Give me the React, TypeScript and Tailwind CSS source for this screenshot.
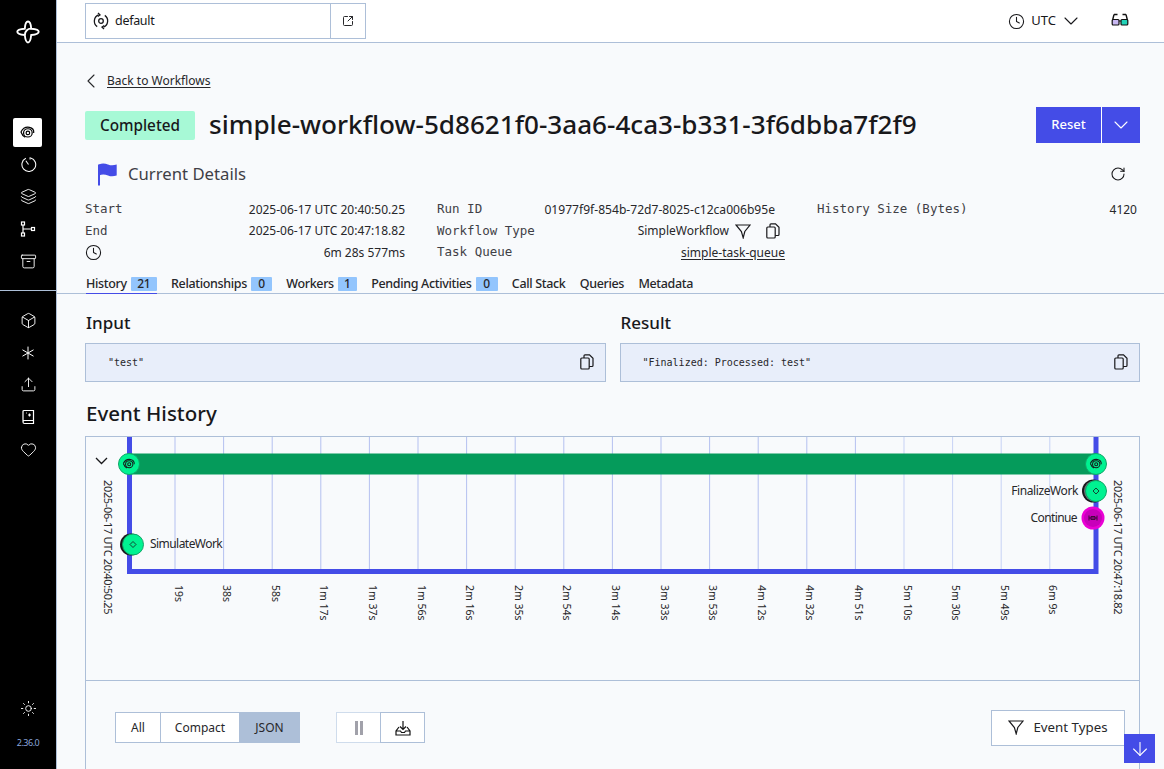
import React from 'react';
import {
  Archive,
  ArrowDown,
  Asterisk,
  Box,
  ChevronDown,
  ChevronLeft,
  Clock,
  Heart,
  Layers,
  RotateCw,
  SquareArrowOutUpRight,
  Sun,
  Upload,
} from 'lucide-react';

const sans = 'font-["Noto_Sans",sans-serif]';

const Swirl: React.FC<{ size?: number; className?: string }> = ({ size = 16, className }) => (
  <svg width={size} height={size} viewBox="0 0 16 16" fill="none" stroke="currentColor" strokeWidth="1.3" className={className}>
    <path d="M1 7.500C3 3.500 7 2 10 2.500c3 .6 5 3 4.600 6" />
    <ellipse cx="8.400" cy="8.400" rx="4.600" ry="4.400" />
    <circle cx="8.400" cy="8.400" r="1.900" />
    <path d="M1 7.500c1 2.600 2.400 4.600 4.600 5.600" />
  </svg>
);

const NamespaceIcon = () => (
  <svg width="16" height="18" viewBox="0 0 16 18" fill="none" stroke="#18181b" strokeWidth="1.300">
    <circle cx="8" cy="9" r="2.300" />
    <path d="M5.500 2.800A6.800 6.800 0 0 0 4.200 14.600" />
    <path d="M10.500 15.200A6.800 6.800 0 0 0 11.800 3.400" />
    <path d="M5 1l2 2-2.300 1.500M11 17l-2-2 2.300-1.500" />
  </svg>
);

const Logo = () => (
  <svg width="24" height="24" viewBox="0 0 24 24" fill="none" stroke="white" strokeWidth="1.9">
    <path d="M12 1.500c2.200 0 3 4 3.200 7.200 3 .2 7.500 1 7.500 3 0 2.300-4.700 3-7.500 3.300-.3 3-1.200 7.500-3.200 7.500s-2.900-4.500-3.200-7.500C6 14.700 1.300 14 1.300 11.700c0-2 4.500-2.800 7.500-3C9 5.500 9.800 1.500 12 1.500Z" />
    <path d="M15.200 8.700C12 8.400 9 11 8.800 15" />
  </svg>
);

const TimerIcon = () => (
  <svg width="17" height="17" viewBox="0 0 16 16" fill="none" stroke="white" strokeWidth="1">
    <path d="M5.500 2.200A6.500 6.500 0 1 0 10 1.800" />
    <path d="M8 8 5.500 4.500" />
    <path d="M9.500 1.200v2" />
  </svg>
);

const ScheduleTree = () => (
  <svg width="16" height="16" viewBox="0 0 16 16" fill="none" stroke="white" strokeWidth="1.200">
    <rect x="1.500" y="1" width="3" height="3" />
    <rect x="1.500" y="12" width="3" height="3" />
    <rect x="11.500" y="6.500" width="3" height="3" />
    <path d="M3 4v8M3 8h8.500" />
  </svg>
);

const BookPlus = () => (
  <svg width="16" height="16" viewBox="0 0 16 16" fill="none" stroke="white" strokeWidth="1.200">
    <path d="M3 13V2.500A1 1 0 0 1 4 1.500h9.500v10H4.500A1.500 1.500 0 0 0 3 13Zm0 0a1.500 1.500 0 0 0 1.500 1.500h9v-3" />
    <path d="M9.500 4.500v3M8 6h3M6 4h.8" />
  </svg>
);

const Glasses3d = () => (
  <svg width="18" height="18" viewBox="0 0 18 18" className="-mt-[2px]">
    <path d="M3 3.500 1.500 9.500M15 3.500l1.500 6M3 3.500h3.500M11.500 3.500H15" fill="none" stroke="#111" strokeWidth="1.400" />
    <rect x="1.200" y="8.500" width="6.800" height="5.500" rx="1" fill="#c9b8f2" stroke="#111" strokeWidth="1.200" />
    <rect x="10" y="8.500" width="6.800" height="5.500" rx="1" fill="#22d3b8" stroke="#111" strokeWidth="1.200" />
    <path d="M8 10h2" stroke="#111" strokeWidth="1.200" />
  </svg>
);

const FlagIcon = () => (
  <svg width="20" height="24" viewBox="0 0 20 24" className="text-[#444ce7]">
    <path d="M1 2.500v21" stroke="currentColor" strokeWidth="2" />
    <path d="M1 2.500c3-1.600 6-1.200 9 0s5.500 1 8.700 0v11c-3.200 1-5.700 1.200-8.700 0s-6-1.500-9 0Z" fill="currentColor" />
  </svg>
);

const DownloadTray = () => (
  <svg width="16" height="16" viewBox="0 0 16 16" fill="none" stroke="#111" strokeWidth="1.200">
    <path d="M8 1v8M5 6.500 8 9.500l3-3" />
    <path d="M4 7 1 11v4h14v-4l-3-4M1 11h4.500l1 1.500h3l1-1.500H15" />
  </svg>
);

const CopyIcon: React.FC<{ className?: string }> = ({ className }) => (
  <svg width="14" height="16" viewBox="0 0 14 16" fill="none" stroke="#18181b" strokeWidth="1.200" className={className}>
    <rect x="0.800" y="4" width="8.400" height="11" rx="1" />
    <path d="M4 4V1.800a1 1 0 0 1 1-1h4.500l3.500 3.500v7.200a1 1 0 0 1-1 1H9.200" />
  </svg>
);

const FunnelIcon: React.FC<{ className?: string }> = ({ className }) => (
  <svg width="16" height="15" viewBox="0 0 16 15" fill="none" stroke="#18181b" strokeWidth="1.200" className={className}>
    <path d="M1 1h14L9.800 7.500 8.200 13.800 6.400 7.500Z" />
  </svg>
);

const sideIcon = 'h-[32.400px] flex items-center justify-center text-white';

const Sidebar = () => (
  <aside className="w-[57px] shrink-0 h-full bg-black border-r border-[#adbfd8] flex flex-col">
    <div className="h-[63px] flex items-center justify-center"><Logo /></div>
    <div className="h-[290px]">
      <div className="pt-[55px]">
        <div className="h-[29px] w-[29px] mx-[13px] bg-white rounded-[2px] flex items-center justify-center text-black mb-[1px]">
          <Swirl size={15} />
        </div>
        <div className={sideIcon}><TimerIcon /></div>
        <div className={sideIcon}><Layers size={17} strokeWidth={1.300} /></div>
        <div className={sideIcon}><ScheduleTree /></div>
        <div className={sideIcon}><Archive size={17} strokeWidth={1.300} /></div>
      </div>
    </div>
    <div className="h-[1px] bg-[#adbfd8] -mt-[63px] mb-[13px]" />
    <div className={sideIcon}><Box size={17} strokeWidth={1.300} /></div>
    <div className={sideIcon}><Asterisk size={24} strokeWidth={1} /></div>
    <div className={sideIcon}><Upload size={17} strokeWidth={1.300} /></div>
    <div className={sideIcon}><BookPlus /></div>
    <div className={sideIcon}><Heart size={17} strokeWidth={1.300} /></div>
    <div className="flex-1" />
    <div className={sideIcon}><Sun size={17} strokeWidth={1.300} /></div>
    <div className={`text-[9px] tracking-[-0.5px] leading-[14px] text-[#8aa5dc] text-center mt-[11px] mb-[19px] ${sans}`}>2.36.0</div>
  </aside>
);

const TopBar = () => (
  <header className="h-[43px] shrink-0 bg-white border-b border-[#adbfd8] flex items-center pl-[28px] pr-[35px]">
    <div className="w-[281px] h-[36px] border border-[#adbfd8] flex items-center">
      <div className="flex-1 flex items-center pl-[7px] gap-[6px] text-[#18181b]">
        <NamespaceIcon />
        <span className="text-[12.500px] tracking-[-0.3px]">default</span>
      </div>
      <div className="w-[35px] h-[34px] border-l border-[#adbfd8] flex items-center justify-center">
        <SquareArrowOutUpRight size={12} className="text-[#27272a]" />
      </div>
    </div>
    <div className="flex-1" />
    <div className="flex items-center text-[#18181b]">
      <Clock size={17} strokeWidth={1.500} />
      <span className="text-[13px] ml-[6px]">UTC</span>
      <ChevronDown size={24} strokeWidth={1.100} className="ml-[3px]" />
    </div>
    <div className="ml-[28px]"><Glasses3d /></div>
  </header>
);

const tabs = [
  { label: 'History', count: 21, badge: 'w-[26px]', active: true },
  { label: 'Relationships', count: 0, badge: 'w-[21px]' },
  { label: 'Workers', count: 1, badge: 'w-[19px]' },
  { label: 'Pending Activities', count: 0, badge: 'w-[22px]' },
  { label: 'Call Stack' },
  { label: 'Queries' },
  { label: 'Metadata' },
];

const Tabs = () => (
  <div className="h-[20px] mt-[10px] border-b border-[#adbfd8] -mr-[24px] -ml-[29px] pl-[30px] flex gap-[14.300px] text-[12.500px] tracking-[-0.34px] font-medium text-[#27272a]">
    {tabs.map((t) => (
      <div key={t.label} className={`h-[20px] flex items-start ${t.active ? 'border-b-[1.500px] border-[#444ce7]' : ''}`}>
        <span className="leading-[15px] mt-[2px]">{t.label}</span>
        {t.count !== undefined && (
          <span className={`ml-[4px] mt-[3px] h-[14px] ${t.badge} bg-[#93c5fd] rounded-[1px] text-[12px] leading-[14px] text-center`}>{t.count}</span>
        )}
      </div>
    ))}
  </div>
);

const Row: React.FC<{ label: string; children: React.ReactNode }> = ({ label, children }) => (
  <div className="flex items-center justify-between h-[21.500px]">
    <span className="font-['DejaVu_Sans_Mono',monospace] text-[12.500px] text-[#3f3f46]">{label}</span>
    <span className="text-[12px] text-[#27272a] flex items-center">{children}</span>
  </div>
);

const Details = () => (
  <div className="flex mt-[8px]">
    <div className="w-[320px]">
      <Row label="Start">2025-06-17 UTC 20:40:50.25</Row>
      <Row label="End">2025-06-17 UTC 20:47:18.82</Row>
      <div className="flex items-center justify-between h-[21.500px] text-[12px] text-[#27272a]">
        <Clock size={17} strokeWidth={1.500} className="text-[#18181b]" />
        <span>6m 28s 577ms</span>
      </div>
    </div>
    <div className="w-[338px] ml-[32px]">
      <Row label="Run ID"><span className="text-[12.100px]">01977f9f-854b-72d7-8025-c12ca006b95e</span></Row>
      <Row label="Workflow Type">
        SimpleWorkflow
        <FunnelIcon className="ml-[6px]" />
        <CopyIcon className="ml-[15px] mr-[-5px]" />
      </Row>
      <Row label="Task Queue"><span className="underline underline-offset-2 mr-[-10px]">simple-task-queue</span></Row>
    </div>
    <div className="w-[320px] ml-[42px]">
      <Row label="History Size (Bytes)">4120</Row>
    </div>
  </div>
);

const Payload: React.FC<{ title: string; value: string }> = ({ title, value }) => (
  <div className="flex-1">
    <h3 className="text-[17px] leading-[24px] font-medium text-[#18181b] pl-[1px]">{title}</h3>
    <div className="mt-[8px] h-[39px] bg-[#e8eefa] border border-[#adbfd8] flex items-center justify-between pl-[22px] pr-[11px]">
      <span className="font-['DejaVu_Sans_Mono',monospace] text-[10px] text-[#27272a]">{value}</span>
      <CopyIcon />
    </div>
  </div>
);

const ticks = ['19s', '38s', '58s', '1m 17s', '1m 37s', '1m 56s', '2m 16s', '2m 35s', '2m 54s', '3m 14s', '3m 33s', '3m 53s', '4m 12s', '4m 32s', '4m 51s', '5m 10s', '5m 30s', '5m 49s', '6m 9s'];

// chart coords are page coords minus (86, 437)
const Timeline = () => (
  <svg width="1053" height="243" viewBox="0 0 1053 243" className="block" fontFamily="'Noto Sans', sans-serif" fill="#27272a">
    {ticks.map((t, i) => {
      const x = 89 + i * 48.6;
      return (
        <g key={t}>
          <line x1={x} y1="0" x2={x} y2="133" stroke={i > 14 ? '#c7d2f5' : '#b4c0f0'} strokeWidth="1" />
          <text transform={`translate(${x - 0.5} 148) rotate(90)`} fontSize="10.500">{t}</text>
        </g>
      );
    })}
    <path d="M43.500 0V134.500H1010V0" fill="none" stroke="#444ce7" strokeWidth="5" />
    <rect x="43" y="16.500" width="967" height="21" fill="#059b5b" />
    <path d="M10 21l5.500 5.500L21 21" fill="none" stroke="#18181b" strokeWidth="1.300" />
    <text transform="translate(18 43) rotate(90)" fontSize="11" letterSpacing="-0.350">2025-06-17 UTC 20:40:50.25</text>
    <text transform="translate(1028 43) rotate(90)" fontSize="11" letterSpacing="-0.350">2025-06-17 UTC 20:47:18.82</text>

    <circle cx="43" cy="27" r="10.500" fill="#00f291" stroke="#10a567" strokeWidth="1" />
    <g transform="translate(36.500 20.500) scale(0.8)" color="#18181b"><Swirl size={16} /></g>
    <circle cx="1010" cy="27" r="10.500" fill="#00f291" stroke="#10a567" strokeWidth="1" />
    <g transform="translate(1003.500 20.500) scale(0.8)" color="#18181b"><Swirl size={16} /></g>

    <circle cx="45" cy="107.500" r="11" fill="#18181b" />
    <circle cx="47" cy="107.500" r="10.500" fill="#00f291" stroke="#10a567" strokeWidth="1" />
    <path d="M47 104.500l3 3-3 3-3-3Z" fill="none" stroke="#18181b" strokeWidth="0.800" />
    <text x="64" y="111" fontSize="12" letterSpacing="-0.550">SimulateWork</text>

    <circle cx="1007.500" cy="54" r="11.500" fill="#18181b" />
    <circle cx="1008.500" cy="54" r="10.500" fill="#71717a" />
    <circle cx="1010" cy="54" r="10.500" fill="#00f291" stroke="#10a567" strokeWidth="1" />
    <path d="M1010 51l3 3-3 3-3-3Z" fill="none" stroke="#18181b" strokeWidth="0.800" />
    <text x="992" y="57.500" fontSize="12" textAnchor="end" letterSpacing="-0.400">FinalizeWork</text>

    <circle cx="1007" cy="81" r="11.500" fill="#ea00d5" />
    <circle cx="1007" cy="81" r="9" fill="#c800ba" />
    <path d="M1003 78.500v5M1011 78.500v5M1003 81h8M1005 79.500h4v3h-4Z" fill="none" stroke="#3f0a3a" strokeWidth="1" />
    <text x="991" y="84.500" fontSize="12" textAnchor="end" letterSpacing="-0.600">Continue</text>
  </svg>
);

const segBtn = 'h-[31px] flex items-center justify-center text-[12px] text-[#27272a] border-y border-[#adbfd8]';

const Controls = () => (
  <div className="flex items-center pl-[29px] pr-[14px] h-[94px]">
    <div className="flex">
      <div className={`${segBtn} w-[45px] bg-white border-l`}>All</div>
      <div className={`${segBtn} w-[79px] bg-white border-l`}>Compact</div>
      <div className={`${segBtn} w-[61px] bg-[#adbfd8]`}>JSON</div>
    </div>
    <div className="flex ml-[36px]">
      <div className="w-[44px] h-[31px] bg-white border border-[#cfdcec] border-r-0 flex items-center justify-center">
        <div className="flex gap-[2px]">
          <span className="w-[3px] h-[14px] bg-[#a1a1aa]" />
          <span className="w-[3px] h-[14px] bg-[#a1a1aa]" />
        </div>
      </div>
      <div className="w-[45px] h-[31px] bg-white border border-[#adbfd8] flex items-center justify-center"><DownloadTray /></div>
    </div>
    <div className="flex-1" />
    <div className="w-[134px] h-[36px] bg-white border border-[#adbfd8] flex items-center justify-center gap-[9px] text-[13.300px] text-[#27272a]">
      <FunnelIcon />
      Event Types
    </div>
  </div>
);

export default function App() {
  return (
    <div className={`relative h-[769px] w-[1164px] overflow-hidden flex bg-[#f8fafc] ${sans}`}>
      <Sidebar />
      <div className="flex-1 min-w-0 flex flex-col">
        <TopBar />
        <main className="flex-1 pl-[28px] pr-[24px] pt-[26px]">
          <a className="flex items-center h-[24px] text-[12px] text-[#27272a]">
            <ChevronLeft size={24} strokeWidth={1.100} className="mr-[4px] -ml-[6px]" />
            <span className="underline underline-offset-2">Back to Workflows</span>
          </a>
          <div className="flex items-center mt-[14px] h-[36px]">
            <span className="h-[29px] w-[110px] bg-[#a7f9d6] rounded-[2px] flex items-center justify-center text-[15.300px] font-medium text-[#18181b]">Completed</span>
            <h1 className="ml-[14px] text-[26.100px] font-medium text-[#18181b] whitespace-nowrap">simple-workflow-5d8621f0-3aa6-4ca3-b331-3f6dbba7f2f9</h1>
            <div className="flex-1" />
            <div className="flex text-white bg-white">
              <div className="w-[65px] h-[36px] bg-[#444ce7] flex items-center justify-center text-[13px] font-medium">Reset</div>
              <div className="w-[38px] h-[36px] ml-[1px] bg-[#444ce7] flex items-center justify-center"><ChevronDown size={24} strokeWidth={1.100} /></div>
            </div>
          </div>
          <div className="flex items-center mt-[14px] h-[34px] pl-[13px]">
            <FlagIcon />
            <span className="ml-[10px] text-[16.700px] text-[#3f3f46]">Current Details</span>
            <div className="flex-1" />
            <RotateCw size={16} strokeWidth={1.600} className="mr-[14px] text-[#18181b]" />
          </div>
          <Details />
          <Tabs />
          <div className="flex gap-[14px] mt-[17px]">
            <Payload title="Input" value={'"test"'} />
            <Payload title="Result" value={'"Finalized: Processed: test"'} />
          </div>
          <h2 className="mt-[16px] text-[20.500px] leading-[30px] font-medium text-[#18181b] pl-[1px]">Event History</h2>
          <div className="mt-[8px] border border-[#adbfd8] h-[340px]">
            <Timeline />
            <div className="border-t border-[#adbfd8]"><Controls /></div>
          </div>
        </main>
      </div>
      <button className="absolute right-[9px] bottom-[6px] w-[31px] h-[29px] bg-[#444ce7] flex items-center justify-center text-white">
        <ArrowDown size={22} strokeWidth={1.200} />
      </button>
    </div>
  );
}
